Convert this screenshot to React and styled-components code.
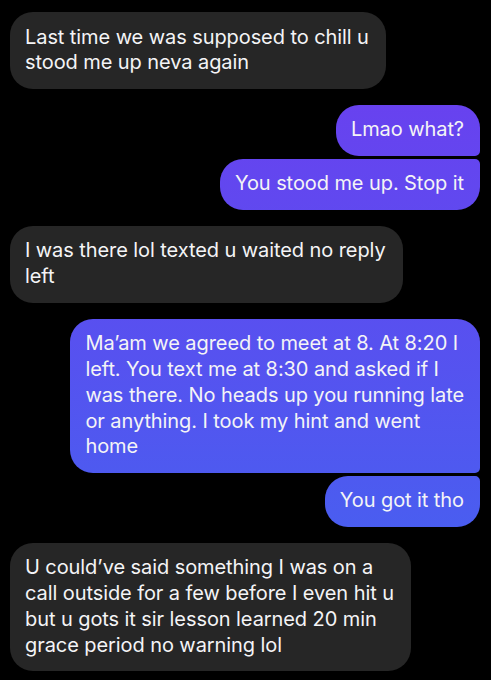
import React from "react";
import styled, { createGlobalStyle, css } from "styled-components";

const Global = createGlobalStyle`
  html, body {
    margin: 0;
    padding: 0;
    background: #000;
  }
  body {
    font-family: Inter, "Noto Sans", "Liberation Sans", sans-serif;
    -webkit-font-smoothing: antialiased;
  }
`;

const Thread = styled.div`
  display: flex;
  flex-direction: column;
  padding: 12px 11px 10px 10px;
  min-height: 680px;
  box-sizing: border-box;
  background: #000;
`;

const Group = styled.div`
  display: flex;
  flex-direction: column;
  align-items: ${(p) => (p.$mine ? "flex-end" : "flex-start")};
  gap: 3px;
  & + & {
    margin-top: 16px;
  }
`;

const R = 23;
const r = 5;

const Bubble = styled.div`
  box-sizing: border-box;
  padding: 12.6px 16px 12.6px 15px;
  font-size: 20px;
  line-height: 25.8px;
  letter-spacing: -0.08px;
  color: #f4f4f6;
  white-space: nowrap;
  border-radius: ${R}px;
  ${(p) =>
    p.$mine
      ? css`
          background: linear-gradient(180deg, #6f3bef 0%, #3f67f0 100%) fixed;
          border-top-right-radius: ${p.$first ? R : r}px;
          border-bottom-right-radius: ${p.$last ? R : r}px;
        `
      : css`
          background: #262626;
          padding-right: 17px;
        `}
`;

const messages = [
  { mine: false, items: [["Last time we was supposed to chill u", "stood me up neva again"]] },
  { mine: true, items: [["Lmao what?"], ["You stood me up. Stop it"]] },
  { mine: false, items: [["I was there lol texted u waited no reply", "left"]] },
  {
    mine: true,
    items: [
      [
        "Ma\u2019am we agreed to meet at 8. At 8:20 I",
        "left. You text me at 8:30 and asked if I",
        "was there. No heads up you running late",
        "or anything. I took my hint and went",
        "home",
      ],
      ["You got it tho"],
    ],
  },
  {
    mine: false,
    items: [
      [
        "U could\u2019ve said something I was on a",
        "call outside for a few before I even hit u",
        "but u gots it sir lesson learned 20 min",
        "grace period no warning lol",
      ],
    ],
  },
];

export default function App() {
  return (
    <>
      <Global />
      <Thread>
        {messages.map((g, gi) => (
          <Group key={gi} $mine={g.mine}>
            {g.items.map((lines, i) => (
              <Bubble
                key={i}
                $mine={g.mine}
                $first={i === 0}
                $last={i === g.items.length - 1}
              >
                {lines.map((l, li) => (
                  <React.Fragment key={li}>
                    {li > 0 && <br />}
                    {l}
                  </React.Fragment>
                ))}
              </Bubble>
            ))}
          </Group>
        ))}
      </Thread>
    </>
  );
}
